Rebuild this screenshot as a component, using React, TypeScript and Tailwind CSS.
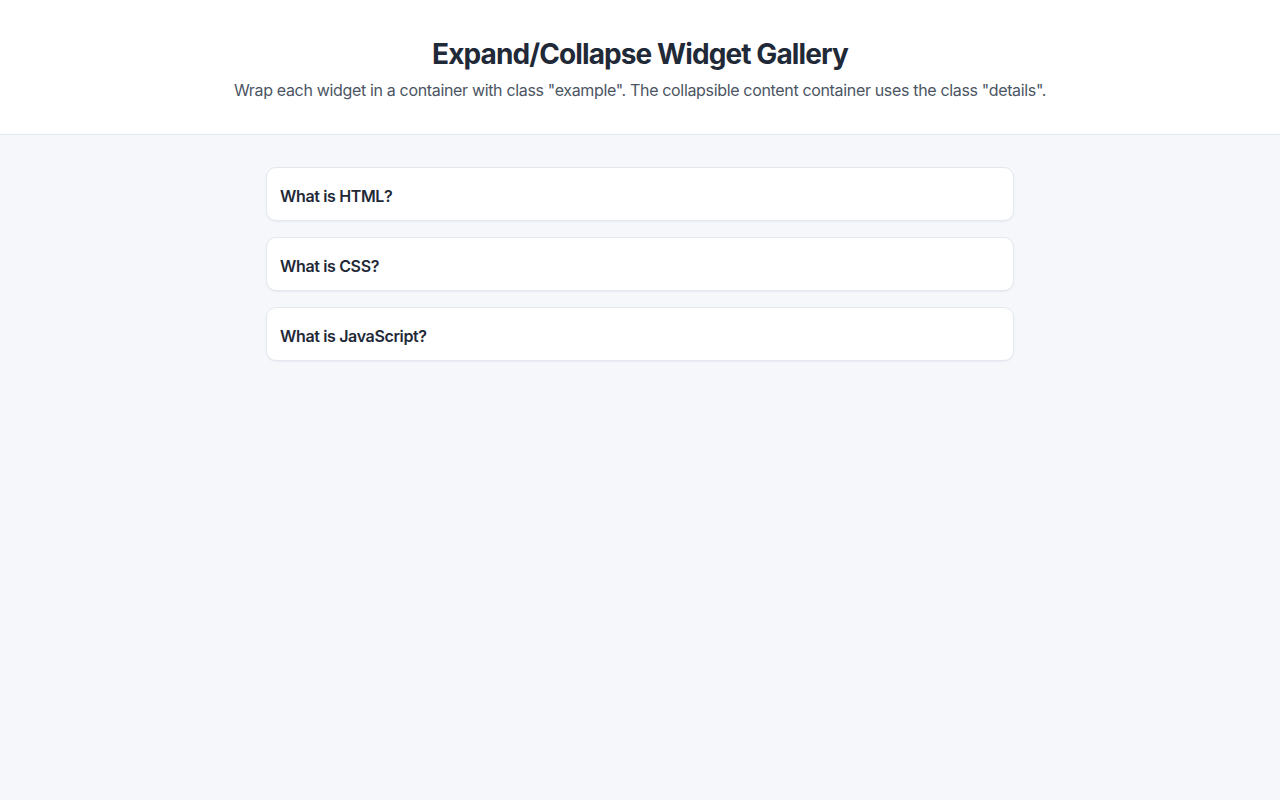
export default function App() {
  const items = ["What is HTML?", "What is CSS?", "What is JavaScript?"];
  return (
    <div className="min-h-screen bg-[#f5f7fb]" style={{ fontFamily: "Inter, 'Noto Sans', sans-serif" }}>
      <header className="bg-white border-b border-[#e2e8f0] pt-[37px] pb-[32px] text-center">
        <h1 className="text-[28px] leading-[34px] font-bold text-[#1f2937] tracking-[-0.032em]">Expand/Collapse Widget Gallery</h1>
        <p className="mt-[7px] text-[16px] leading-[24px] text-[#4b5563] tracking-[-0.021em]">
          Wrap each widget in a container with class "example". The collapsible content container uses the class "details".
        </p>
      </header>
      <main className="mx-auto w-[748px] pt-[32px] flex flex-col gap-[16px]">
        {items.map((t) => (
          <div key={t} className="bg-white border border-[#e2e8f0] rounded-[10px] shadow-[0_1px_2px_rgba(15,23,42,0.05)] h-[54px] flex items-center pt-[4px] px-[13px]">
            <span className="text-[16px] font-semibold text-[#1f2937] tracking-[-0.022em]">{t}</span>
          </div>
        ))}
      </main>
    </div>
  );
}
